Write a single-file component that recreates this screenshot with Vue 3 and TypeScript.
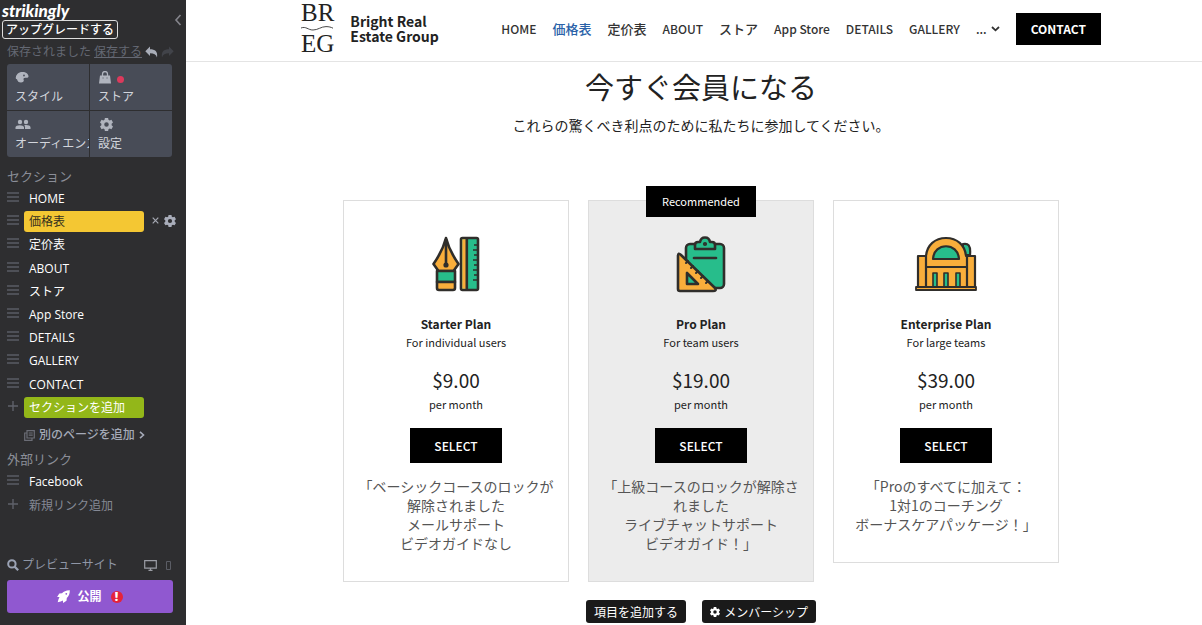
<script setup lang="ts">
interface Plan {
  name: string
  audience: string
  price: string
  features: string[]
  icon: 'tools' | 'clipboard' | 'building'
  recommended?: boolean
}

const sections: string[] = ['HOME', '価格表', '定价表', 'ABOUT', 'ストア', 'App Store', 'DETAILS', 'GALLERY', 'CONTACT']
const navItems: string[] = sections.slice(0, 8)
const activeSection = '価格表'

const isLatin = (text: string): boolean => /^[\x20-\x7e]+$/.test(text)

const plans: Plan[] = [
  {
    name: 'Starter Plan',
    audience: 'For individual users',
    price: '$9.00',
    icon: 'tools',
    features: ['「ベーシックコースのロックが', '解除されました', 'メールサポート', 'ビデオガイドなし'],
  },
  {
    name: 'Pro Plan',
    audience: 'For team users',
    price: '$19.00',
    icon: 'clipboard',
    recommended: true,
    features: ['「上級コースのロックが解除さ', 'れました', 'ライブチャットサポート', 'ビデオガイド！」'],
  },
  {
    name: 'Enterprise Plan',
    audience: 'For large teams',
    price: '$39.00',
    icon: 'building',
    features: ['「Proのすべてに加えて：', '1対1のコーチング', 'ボーナスケアパッケージ！」'],
  },
]

const gearPath =
  'M6 0h4l.4 2.300 1.500.8 2.200-.8 1.900 3.200-1.700 1.600v1.800l1.700 1.600-1.900 3.200-2.200-.8-1.500.8L10 16H6l-.4-2.300-1.500-.8-2.200.8L0 10.500l1.700-1.600V7.100L0 5.500l1.900-3.200 2.200.8 1.500-.8zM8 5.200a2.800 2.800 0 1 0 0 5.600a2.800 2.800 0 0 0 0-5.600z'
</script>

<template>
  <div class="app">
    <aside class="sidebar">
      <header class="top">
        <div class="brand-row">
          <span class="wordmark">strikingly</span>
          <button class="collapse" aria-label="閉じる">
            <svg width="8" height="12" viewBox="0 0 8 12"><path d="M6.500 1L2 6l4.500 5" fill="none" stroke="#85858c" stroke-width="1.600" /></svg>
          </button>
        </div>
        <button class="upgrade">アップグレードする</button>
        <div class="save-row">
          <span>保存されました</span>
          <a href="#">保存する</a>
          <button aria-label="元に戻す">
            <svg width="13" height="12" viewBox="0 0 13 12"><path d="M5 .5v2.700c5 0 8 2 7 8.300C11 8.500 9 7.300 5 7.300V10L.3 5.200z" fill="#a9adb8" /></svg>
          </button>
          <button aria-label="やり直す">
            <svg width="13" height="12" viewBox="0 0 13 12"><path d="M8 .5v2.700c-5 0-8 2-7 8.300C2 8.500 4 7.300 8 7.300V10l4.700-4.800z" fill="#414349" /></svg>
          </button>
        </div>
      </header>

      <div class="tiles">
        <button class="tile">
          <svg width="14" height="13" viewBox="0 0 14 13"><path fill-rule="evenodd" d="M7.500 1C11 1 13.500 3 13.500 5.500c0 1-.9 1.300-3 1.200-2 0-2.500 1.400-1.700 2.300.3 1.500-1 2.500-2.800 2.500-2.200 0-3.600-1.300-4-3.300C.8 8 .5 7 .9 5.900 1.500 3 4.200 1 7.500 1zM9 3.600a.9.9 0 1 0 0 1.800a.9.9 0 0 0 0-1.800z" fill="#b0b4be" /></svg>
          <span>スタイル</span>
        </button>
        <button class="tile">
          <span class="tile-icons">
            <svg width="14" height="13" viewBox="0 0 14 13"><path d="M4.500 5V3a2.500 2.500 0 0 1 5 0v2" fill="none" stroke="#b0b4be" stroke-width="1.300" /><path d="M2 4.500h10l1 8H1z" fill="#b0b4be" /><path d="M4.600 7h.9M8.600 7h.9" stroke="#484c57" /></svg>
            <i class="dot"></i>
          </span>
          <span>ストア</span>
        </button>
        <button class="tile">
          <svg width="16" height="13" viewBox="0 0 16 13" fill="#b0b4be"><circle cx="5" cy="4" r="2.200" /><circle cx="11" cy="4" r="2.200" /><path d="M.5 11V9.300C.5 6.500 9 6.500 9 9.300V11zM10 11V9.300c0-.9-.3-1.500-.8-2C12 6.700 15.500 7.500 15.500 9.300V11z" /></svg>
          <span>オーディエンス</span>
        </button>
        <button class="tile">
          <svg class="gear" width="13" height="13" viewBox="0 0 16 16"><path :d="gearPath" fill="#b0b4be" fill-rule="evenodd" /></svg>
          <span>設定</span>
        </button>
      </div>

      <h2 class="group-title">セクション</h2>
      <ul class="section-list">
        <li v-for="name in sections" :key="name" :class="{ active: name === activeSection }">
          <svg class="handle" width="12" height="10" viewBox="0 0 12 10"><path d="M0 1h12M0 5h12M0 9h12" stroke="#5a5c64" stroke-width="1.500" /></svg>
          <button class="item">{{ name }}</button>
          <template v-if="name === activeSection">
            <button class="row-tool" aria-label="削除">
              <svg width="7" height="7" viewBox="0 0 7 7"><path d="M.7.7l5.600 5.600M6.300.7L.7 6.300" stroke="#a5a8b2" stroke-width="1.200" /></svg>
            </button>
            <button class="row-tool" aria-label="セクション設定">
              <svg width="12" height="12" viewBox="0 0 16 16"><path :d="gearPath" fill="#a9adba" fill-rule="evenodd" /></svg>
            </button>
          </template>
        </li>
        <li class="add">
          <svg class="handle" width="12" height="10" viewBox="0 0 12 10"><path d="M1 5h10M6 0v10" stroke="#5f616a" stroke-width="1.400" /></svg>
          <button class="item">セクションを追加</button>
        </li>
      </ul>
      <a class="add-page" href="#">
        <svg width="11" height="11" viewBox="0 0 11 11"><path d="M3 .7h7.300V8H3zM3 3H.7v7.300H8V8M4.700 3h4M4.700 5.200h4" fill="none" stroke="#6b6d76" stroke-width="1.200" /></svg>
        <span>別のページを追加</span>
        <svg width="6" height="8" viewBox="0 0 6 8"><path d="M1 .8L4.500 4 1 7.200" fill="none" stroke="#a5aab8" stroke-width="1.600" /></svg>
      </a>
      <h2 class="group-title">外部リンク</h2>
      <ul class="section-list links">
        <li>
          <svg class="handle" width="12" height="10" viewBox="0 0 12 10"><path d="M0 1h12M0 5h12M0 9h12" stroke="#5a5c64" stroke-width="1.500" /></svg>
          <button class="item">Facebook</button>
        </li>
        <li class="new-link">
          <svg class="handle" width="12" height="10" viewBox="0 0 12 10"><path d="M1 5h10M6 0v10" stroke="#5f616a" stroke-width="1.400" /></svg>
          <button class="item">新規リンク追加</button>
        </li>
      </ul>

      <footer class="bottom">
        <div class="preview">
          <svg width="12" height="12" viewBox="0 0 12 12"><circle cx="4.900" cy="4.900" r="3.700" fill="none" stroke="#9ba3b5" stroke-width="2" /><path d="M7.600 7.600l3.600 3.600" stroke="#9ba3b5" stroke-width="2.200" /></svg>
          <a href="#">プレビューサイト</a>
          <button class="desktop" aria-label="デスクトップ">
            <svg width="13" height="11" viewBox="0 0 13 11"><path d="M.7.7h11.600v7.500H.7zM6.500 8v2M4.500 10.300h4" fill="none" stroke="#9b9da5" stroke-width="1.200" /></svg>
          </button>
          <button aria-label="モバイル">
            <svg width="5" height="9" viewBox="0 0 5 9"><path d="M.5.5h4v8h-4z" fill="none" stroke="#5b5d65" /></svg>
          </button>
        </div>
        <button class="publish">
          <svg width="13" height="13" viewBox="0 0 13 13"><path fill-rule="evenodd" d="M12.800.2C9 .1 6.800 1.500 5 3.200L2.300 3.500.1 6.900l2.400.2L1.500 9.300l-.8 3 3-.8 2.200-1 .2 2.400 3.400-2.200L9.800 8c2-2 3.100-4 3-7.800zM9.300 2.900a.9.9 0 1 1 0 1.800a.9.9 0 0 1 0-1.800z" fill="#fff" /></svg>
          <span>公開</span>
          <b class="alert">!</b>
        </button>
      </footer>
    </aside>

    <main class="site">
      <header class="site-header">
        <div class="container header-row">
          <a class="logo" href="#">
            <span class="monogram">
              <span>BR</span>
              <svg width="32" height="5" viewBox="0 0 32 5"><path d="M0 2c5-2 7 2 12 2S20 .6 25 .6c3 0 5 .6 7 1.600" fill="none" stroke="#333" stroke-width=".9" /></svg>
              <span>EG</span>
            </span>
            <span>Bright Real<br />Estate Group</span>
          </a>
          <nav>
            <a v-for="name in navItems" :key="name" href="#" :class="{ current: name === activeSection, kana: !isLatin(name) }">{{ name }}</a>
            <button class="more">
              <span>...</span>
              <svg width="9" height="6" viewBox="0 0 9 6"><path d="M1 1l3.500 3.300L8 1" fill="none" stroke="#333" stroke-width="1.800" /></svg>
            </button>
            <a class="contact" href="#">CONTACT</a>
          </nav>
        </div>
      </header>

      <section class="pricing">
        <h1>今すぐ会員になる</h1>
        <p class="lead">これらの驚くべき利点のために私たちに参加してください。</p>
        <div class="plans">
          <article v-for="plan in plans" :key="plan.name" class="plan" :class="{ recommended: plan.recommended }">
            <span v-if="plan.recommended" class="ribbon">Recommended</span>
            <svg v-if="plan.icon === 'tools'" width="64" height="60" viewBox="0 0 64 60" stroke="#302e2b" stroke-width="2.600" stroke-linejoin="round">
              <path d="M22 4C20 12 15 22 9.500 30l5 7h15l5-7C29 22 24 12 22 4z" fill="#f9ae3b" />
              <path d="M22 5v26" fill="none" />
              <circle cx="22" cy="31" r="1.300" fill="#302e2b" />
              <rect x="13" y="37" width="18" height="11" fill="#27bd8b" />
              <path d="M13 48h18v6q0 2-2 2H15q-2 0-2-2z" fill="#f9ae3b" />
              <rect x="37" y="4" width="17" height="52" rx="1.500" fill="#27bd8b" />
              <path d="M38.300 5.300h4v49.400h-4z" fill="#f9ae3b" stroke="none" />
              <path d="M42.800 4v52" />
              <path d="M54 11h-4M54 16h-5M54 21h-4M54 26h-5M54 31h-4M54 36h-5M54 41h-4M54 46h-5" stroke-width="1.500" />
            </svg>
            <svg v-else-if="plan.icon === 'clipboard'" width="64" height="60" viewBox="0 0 64 60" stroke="#302e2b" stroke-width="2.600" stroke-linejoin="round" stroke-linecap="round">
              <rect x="17" y="10" width="38" height="44" rx="4" fill="#27bd8b" />
              <path d="M26 15v-4q0-3 3-3h2c1-6 9-6 10 0h2q3 0 3 3v4z" fill="#27bd8b" />
              <circle cx="36" cy="10" r=".8" />
              <path d="M25 24h22" />
              <path d="M9 22q0-4 3-1l34 33q2 3-2 3H11q-2 0-2-2z" fill="#f9ae3b" />
              <path d="M18 39v11h11z" fill="#27bd8b" />
              <path d="M19 27l-2 2M24 32l-2 2M29 37l-2 2M34 42l-2 2M39 47l-2 2" stroke-width="2" />
            </svg>
            <svg v-else width="64" height="60" viewBox="0 0 64 60" stroke="#302e2b" stroke-width="2.200" stroke-linejoin="round">
              <path d="M49 10c5-1 8 1 7 11h-8z" fill="#27bd8b" />
              <path d="M4 22h8C13 11 21 4 32 4s19 7 20 18h9v31H4z" fill="#f9ae3b" />
              <path d="M19 25c1-17 25-17 26 0z" fill="#27bd8b" />
              <path d="M12 22v31M53 22v31M12 33h41" fill="none" />
              <path d="M19 39h4v15h-4zM30 39h4v15h-4zM42 39h4v15h-4z" fill="#27bd8b" stroke-width="1.600" />
              <path d="M2 53h60v3H2z" fill="#f9ae3b" stroke-width="1.800" />
            </svg>
            <h3>{{ plan.name }}</h3>
            <p class="small">{{ plan.audience }}</p>
            <p class="price">{{ plan.price }}</p>
            <p class="small">per month</p>
            <button class="select">SELECT</button>
            <ul class="features">
              <li v-for="line in plan.features" :key="line">{{ line }}</li>
            </ul>
          </article>
        </div>
        <div class="actions">
          <button>項目を追加する</button>
          <button>
            <svg width="10" height="10" viewBox="0 0 16 16"><path :d="gearPath" fill="#fff" fill-rule="evenodd" /></svg>
            <span>メンバーシップ</span>
          </button>
        </div>
      </section>
    </main>
  </div>
</template>

<style>
body {
  margin: 0;
}
</style>

<style scoped>
.app {
  display: grid;
  grid-template-columns: 186px minmax(0, 1fr);
  min-height: 100vh;
  background: #fff;
  color: #222;
  font-family: 'Noto Sans CJK JP', 'Noto Sans', sans-serif;
}
* {
  box-sizing: border-box;
}
button {
  margin: 0;
  padding: 0;
  border: 0;
  background: none;
  color: inherit;
  font: inherit;
  cursor: pointer;
}
a {
  color: inherit;
  text-decoration: none;
}
ul {
  margin: 0;
  padding: 0;
  list-style: none;
}
h1,
h2,
h3,
p {
  margin: 0;
}
svg {
  flex: none;
  display: block;
}

.sidebar {
  display: flex;
  flex-direction: column;
  background: #2e2e30;
  color: #fff;
  font-family: 'Open Sans', 'Noto Sans CJK JP', sans-serif;
  font-size: 12px;
  line-height: 18px;
}
.top {
  padding: 4px 4px 0 2px;
}
.brand-row {
  display: flex;
  justify-content: space-between;
  height: 16px;
}
.wordmark {
  font-family: Lato, sans-serif;
  font-size: 17px;
  font-weight: 900;
  font-style: italic;
  line-height: 14px;
}
.collapse {
  align-self: flex-end;
  height: 6px;
}
.upgrade {
  display: block;
  height: 19px;
  padding: 0 3px;
  border: 1px solid #ddd;
  border-radius: 3px;
  font-weight: 500;
  line-height: 17px;
}
.save-row {
  display: flex;
  align-items: center;
  gap: 3px;
  height: 25px;
  padding-left: 5px;
  color: #646873;
  white-space: nowrap;
}
.save-row a {
  text-decoration: underline;
}
.tiles {
  display: grid;
  grid-template-columns: 1fr 1fr;
  gap: 1px;
  margin: 0 14px 0 7px;
  border-radius: 3px;
  overflow: hidden;
}
.tile {
  display: flex;
  flex-direction: column;
  align-items: flex-start;
  gap: 4px;
  height: 46px;
  padding: 7px 0 0 8px;
  background: #484c57;
  color: #d2d5dc;
  white-space: nowrap;
  overflow: hidden;
}
.tile-icons {
  display: flex;
  align-items: center;
  gap: 5px;
  height: 13px;
}
.gear {
  margin-left: 2px;
}
.dot {
  width: 7px;
  height: 7px;
  margin-top: 4px;
  border-radius: 50%;
  background: #dc3a5c;
}
.group-title {
  margin: 9px 0 0 7px;
  color: #8b8e98;
  font-size: 13px;
  font-weight: 400;
  line-height: 20px;
}
.section-list {
  display: grid;
  grid-auto-rows: 1fr;
  height: 232px;
  margin-top: 1px;
  padding-left: 7px;
}
.section-list li {
  display: flex;
  align-items: center;
}
.handle {
  margin: 0 5px 3px 0;
}
.item {
  width: 120px;
  height: 21px;
  padding: 0 5px;
  border-radius: 3px;
  line-height: 21px;
  text-align: left;
  white-space: nowrap;
}
.active .item {
  background: #f4c733;
  color: #35301f;
}
.add .item {
  background: #93b719;
}
.row-tool {
  margin: 0 0 2px 8px;
}
.row-tool + .row-tool {
  margin-left: 5px;
}
.add-page {
  display: flex;
  align-items: center;
  gap: 4px;
  margin: 7px 0 0 24px;
  color: #a5aab8;
  font-weight: 500;
}
.add-page + .group-title {
  margin-top: 5px;
}
.links {
  height: 47px;
}
.new-link .item {
  color: #858995;
}
.bottom {
  margin-top: auto;
  padding: 0 13px 12px 7px;
}
.preview {
  display: flex;
  align-items: center;
  gap: 3px;
  height: 30px;
  padding-right: 2px;
  color: #8f96a6;
}
.desktop {
  margin: 0 6px 0 auto;
}
.publish {
  display: flex;
  align-items: center;
  justify-content: center;
  gap: 7px;
  width: 100%;
  height: 33px;
  border-radius: 3px;
  background: #9058d0;
  font-weight: 700;
}
.alert {
  width: 12px;
  height: 12px;
  margin-left: 2px;
  border-radius: 50%;
  background: #e5233a;
  line-height: 12px;
  text-align: center;
}

.site {
  min-width: 0;
}
.site-header {
  border-bottom: 1px solid #e4e4e4;
}
.container {
  max-width: 800px;
  margin: 0 auto;
}
.site-header,
.pricing {
  padding-left: 14px;
}
.header-row {
  display: flex;
  align-items: center;
  justify-content: space-between;
  height: 61px;
  padding-bottom: 4px;
}
.logo {
  display: flex;
  align-items: center;
  gap: 16px;
  font-size: 14px;
  font-weight: 700;
  line-height: 15px;
}
.monogram {
  color: #222;
  font-family: 'Liberation Serif', serif;
  font-size: 25px;
  font-weight: 400;
  line-height: 26px;
}
.monogram span {
  display: block;
}
nav {
  display: flex;
  align-items: center;
  gap: 16px;
  color: #333;
  font-size: 12px;
  font-weight: 500;
  white-space: nowrap;
}
.kana {
  font-size: 13px;
}
.current {
  color: #2a62a8;
}
.more {
  display: flex;
  align-items: center;
  gap: 4px;
}
.contact {
  height: 32px;
  padding: 0 15px;
  background: #000;
  color: #fff;
  font-weight: 700;
  line-height: 32px;
}
.pricing {
  padding-top: 3px;
  text-align: center;
}
h1 {
  font-size: 29px;
  font-weight: 400;
  line-height: 42px;
}
.lead {
  margin-top: 8px;
  font-size: 14px;
  line-height: 20px;
}
.plans {
  display: grid;
  grid-template-columns: repeat(3, minmax(0, 1fr));
  align-items: start;
  gap: 19px;
  max-width: 716px;
  margin: 65px auto 0;
}
.plan {
  position: relative;
  display: flex;
  flex-direction: column;
  align-items: center;
  padding: 33px 8px 28px;
  border: 1px solid #ddd;
}
.recommended {
  background: #ececec;
}
.ribbon {
  position: absolute;
  top: -15px;
  padding: 0 16px;
  background: #000;
  color: #fff;
  font-size: 11px;
  line-height: 31px;
}
h3 {
  margin-top: 20px;
  font-size: 12px;
  font-weight: 700;
  line-height: 20px;
}
.small {
  font-size: 11px;
  line-height: 17px;
}
.price {
  margin: 15px 0 2px;
  font-size: 19px;
  line-height: 28px;
}
.select {
  height: 35px;
  margin: 15px 0 14px;
  padding: 0 24px;
  background: #000;
  color: #fff;
  font-size: 12px;
  font-weight: 500;
}
.features {
  color: #555;
  font-size: 14px;
  line-height: 19px;
  white-space: nowrap;
}
.actions {
  display: flex;
  justify-content: center;
  gap: 16px;
  margin-top: 18px;
}
.actions button {
  display: flex;
  align-items: center;
  gap: 4px;
  height: 23px;
  padding: 0 8px;
  border-radius: 3px;
  background: #1a1a1a;
  color: #fff;
  font-size: 12px;
}
</style>
